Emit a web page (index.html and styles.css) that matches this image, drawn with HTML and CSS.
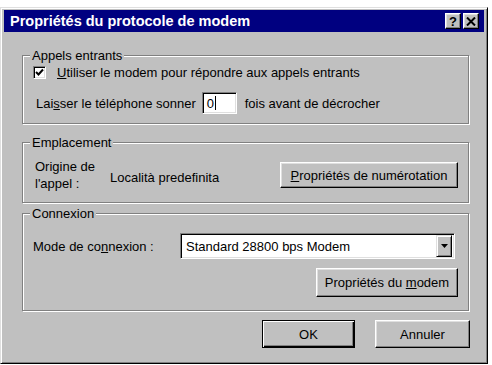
FILE: index.html
```html
<!DOCTYPE html>
<html lang="fr">
<head>
    <meta charset="UTF-8">
    <title>Propriétés du protocole de modem</title>
    <link rel="stylesheet" href="styles.css">
</head>
<body>

    <div class="window">
        <div class="titlebar">
            <span class="title">Propriétés du protocole de modem</span>
            <span class="caption-btn">?</span>
            <span class="caption-btn">
                <svg width="10" height="9" viewBox="0 0 10 9"><path d="M1 0.5 L9 8.5 M9 0.5 L1 8.5" stroke="#000" stroke-width="2"/></svg>
            </span>
        </div>

        <div class="content">
            <!-- Incoming calls -->
            <fieldset class="group incoming">
                <legend>Appels entrants</legend>
                <div class="check-row">
                    <span class="checkbox">
                        <svg width="9" height="9" viewBox="0 0 9 9"><path d="M1 4 L3.5 6.5 L8 1.5" fill="none" stroke="#000" stroke-width="2"/></svg>
                    </span>
                    <span><u>U</u>tiliser le modem pour répondre aux appels entrants</span>
                </div>
                <div class="ring-row">
                    <span class="ring-label">Lai<u>s</u>ser le téléphone sonner</span>
                    <span class="field rings">0<span class="caret"></span></span>
                    <span>fois avant de décrocher</span>
                </div>
            </fieldset>

            <!-- Location -->
            <fieldset class="group location">
                <legend>Emplacement</legend>
                <div class="location-row">
                    <span class="origin-label">Origine de<br>l'appel :</span>
                    <span class="origin-value">Località predefinita</span>
                    <button class="btn dial-btn"><u>P</u>ropriétés de numérotation</button>
                </div>
            </fieldset>

            <!-- Connection -->
            <fieldset class="group connection">
                <legend>Connexion</legend>
                <div class="mode-row">
                    <span class="mode-label">Mode de co<u>n</u>nexion :</span>
                    <div class="field select">
                        <span class="select-text">Standard 28800 bps Modem</span>
                        <span class="drop-btn">
                            <svg width="7" height="4" viewBox="0 0 7 4"><path d="M0 0 H7 L3.5 4 Z" fill="#000"/></svg>
                        </span>
                    </div>
                </div>
                <div class="modem-row">
                    <button class="btn modem-btn">Propriétés du <u>m</u>odem</button>
                </div>
            </fieldset>

            <div class="footer">
                <button class="btn default ok-btn">OK</button>
                <button class="btn cancel-btn">Annuler</button>
            </div>
        </div>
    </div>

</body>
</html>
```

FILE: styles.css
```css
/* General reset */
* {
    margin: 0;
    padding: 0;
    box-sizing: border-box;
}

body {
    background: #fff;
    font-family: "Liberation Sans", Arial, sans-serif;
    font-size: 13px;
    color: #000;
}

u {
    text-decoration: underline;
    text-underline-offset: 1px;
}

/* Dialog frame */
.window {
    width: 488px;
    height: 357px;
    margin-top: 7px;
    background: #c0c0c0;
    border: 1px solid;
    border-color: #dfdfdf #000 #000 #dfdfdf;
    box-shadow: inset 1px 1px #fff, inset -1px -1px #808080;
    padding: 2px 3px;
    display: flex;
    flex-direction: column;
}

.titlebar {
    height: 22px;
    background: #000080;
    display: flex;
    align-items: center;
    gap: 2px;
    padding: 0 5px 0 6px;
}

.title {
    flex: 1;
    color: #fff;
    font-weight: bold;
    font-size: 14.5px;
}

.caption-btn {
    width: 16px;
    height: 16px;
    background: #c0c0c0;
    border: 1px solid;
    border-color: #fff #000 #000 #fff;
    box-shadow: inset -1px -1px #808080, inset 1px 1px #dfdfdf;
    display: flex;
    align-items: center;
    justify-content: center;
    font-weight: bold;
    font-size: 13px;
    line-height: 1;
}

.content {
    padding: 16px 15px 0 18px;
}

/* Group boxes */
.group {
    border: 1px solid #808080;
    box-shadow: 1px 1px 0 #fff, inset 1px 1px 0 #fff;
    padding: 0 10px;
}

.group legend {
    line-height: 15px;
    padding: 0 2px;
    margin-left: -3px;
    background: #c0c0c0;
}

.incoming {
    padding-bottom: 9px;
}

.check-row {
    height: 18px;
    display: flex;
    align-items: center;
}

.checkbox {
    width: 13px;
    height: 13px;
    margin-right: 11px;
    background: #fff;
    border: 1px solid;
    border-color: #808080 #fff #fff #808080;
    box-shadow: inset 1px 1px #000, inset -1px -1px #dfdfdf;
    display: flex;
    align-items: center;
    justify-content: center;
}

.ring-row {
    margin-top: 11px;
    display: flex;
    align-items: center;
}

.ring-label {
    margin-left: 3px;
    margin-right: 6px;
}

/* Sunken white fields */
.field {
    background: #fff;
    border: 1px solid;
    border-color: #808080 #fff #fff #808080;
    box-shadow: inset 1px 1px #000, inset -1px -1px #dfdfdf;
}

.rings {
    width: 35px;
    height: 22px;
    margin-right: 8px;
    padding-left: 4px;
    display: flex;
    align-items: center;
}

.caret {
    width: 1px;
    height: 14px;
    background: #000;
    margin-left: 1px;
}

.location {
    margin-top: 11px;
    padding-top: 8px;
    padding-bottom: 10px;
}

.location-row {
    display: flex;
    align-items: center;
}

.origin-label {
    width: 75px;
    margin-left: 2px;
    line-height: 17px;
}

.origin-value {
    margin-top: 4px;
}

.connection {
    margin-top: 3px;
    padding-top: 12px;
    padding-bottom: 13px;
}

.mode-row {
    display: flex;
    align-items: center;
}

.mode-label {
    width: 147px;
}

.select {
    width: 275px;
    height: 26px;
    padding: 2px;
    display: flex;
    align-items: center;
}

.select-text {
    flex: 1;
    padding-left: 3px;
}

.drop-btn {
    width: 16px;
    height: 22px;
    background: #c0c0c0;
    border: 1px solid;
    border-color: #dfdfdf #000 #000 #dfdfdf;
    box-shadow: inset 1px 1px #fff, inset -1px -1px #808080;
    display: flex;
    align-items: center;
    justify-content: center;
}

.modem-row {
    margin-top: 9px;
    display: flex;
    justify-content: flex-end;
}

/* Push buttons */
.btn {
    height: 26px;
    background: #c0c0c0;
    border: 1px solid;
    border-color: #fff #000 #000 #fff;
    box-shadow: inset -1px -1px #808080, inset 1px 1px #dfdfdf;
    font-family: inherit;
    font-size: 13px;
    color: #000;
}

.btn.default {
    border-color: #000;
    box-shadow: inset 1px 1px #fff, inset -1px -1px #000, inset -2px -2px #808080;
}

.dial-btn {
    margin-left: auto;
    width: 178px;
}

.modem-btn {
    width: 142px;
    height: 29px;
}

.footer {
    margin-top: 9px;
    margin-right: -1px;
    display: flex;
    justify-content: flex-end;
    gap: 20px;
}

.ok-btn {
    width: 93px;
    height: 28px;
}

.cancel-btn {
    width: 95px;
    height: 28px;
}
```
